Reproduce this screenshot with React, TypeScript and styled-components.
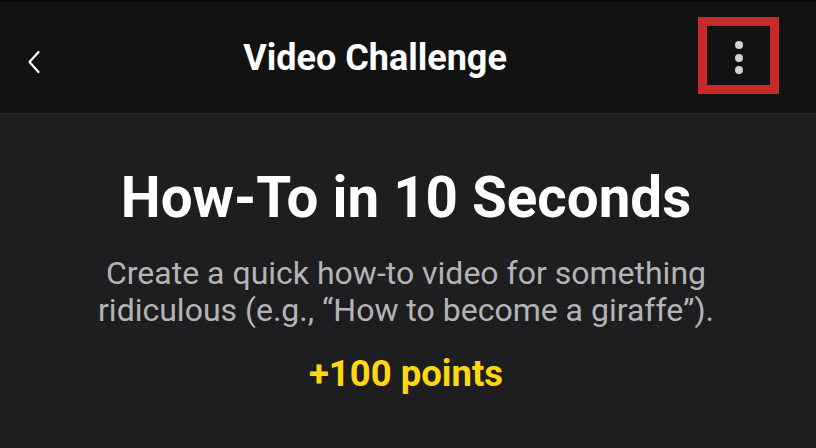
import styled, { createGlobalStyle } from "styled-components";

const GlobalStyle = createGlobalStyle`
  html, body {
    margin: 0;
    padding: 0;
    background: #1e1e20;
  }
  body {
    font-family: "Roboto", "Liberation Sans", sans-serif;
    -webkit-font-smoothing: antialiased;
  }
`;

const Screen = styled.div`
  width: 816px;
  height: 448px;
  display: flex;
  flex-direction: column;
  background: #1e1e20;
  overflow: hidden;
`;

const Header = styled.header`
  height: 111px;
  display: flex;
  align-items: center;
  padding: 0 37px 0 16px;
  background: #121212;
  border-top: 2px solid #060606;
  border-bottom: 1px solid #29292b;
  flex-shrink: 0;
`;

const BackButton = styled.button`
  width: 36px;
  height: 48px;
  display: flex;
  align-items: center;
  justify-content: center;
  padding: 8px 0 0;
  background: none;
  border: 0;
  color: #ffffff;
`;

const Title = styled.h1`
  flex: 1;
  margin: 0;
  text-align: center;
  font-size: 36px;
  line-height: 44px;
  font-weight: 700;
  color: #ffffff;
`;

const MenuButton = styled.button`
  box-sizing: border-box;
  width: 81px;
  height: 77px;
  margin-bottom: 4px;
  display: flex;
  flex-direction: column;
  align-items: center;
  justify-content: center;
  gap: 4.5px;
  padding: 4px 0 0;
  background: transparent;
  border: 9px solid #c8292b;
`;

const Dot = styled.span`
  width: 8px;
  height: 8px;
  border-radius: 50%;
  background: #d2d2d2;
`;

const Content = styled.main`
  flex: 1;
  display: flex;
  flex-direction: column;
  align-items: center;
  padding: 51px 4px 0 0;
  text-align: center;
`;

const Heading = styled.h2`
  margin: 0;
  font-size: 56.5px;
  line-height: 66px;
  font-weight: 700;
  color: #ffffff;
`;

const Description = styled.p`
  margin: 24px 0 0;
  max-width: 660px;
  font-size: 32px;
  line-height: 37px;
  font-weight: 400;
  color: #b4b4b6;
`;

const Points = styled.p`
  margin: 23px 0 0;
  font-size: 36.5px;
  line-height: 44px;
  font-weight: 700;
  color: #fdd70f;
`;

const ChevronLeft = () => (
  <svg width="14" height="24" viewBox="0 0 14 24" fill="none">
    <path
      d="M11.5 2 L2.5 12 L11.5 22"
      stroke="currentColor"
      strokeWidth="2.2"
      strokeLinecap="round"
      strokeLinejoin="round"
    />
  </svg>
);

export default function App() {
  return (
    <Screen>
      <GlobalStyle />
      <Header>
        <BackButton aria-label="Back">
          <ChevronLeft />
        </BackButton>
        <Title>Video Challenge</Title>
        <MenuButton aria-label="More options">
          <Dot />
          <Dot />
          <Dot />
        </MenuButton>
      </Header>
      <Content>
        <Heading>How-To in 10 Seconds</Heading>
        <Description>
          Create a quick how-to video for something ridiculous (e.g., “How to
          become a giraffe”).
        </Description>
        <Points>+100 points</Points>
      </Content>
    </Screen>
  );
}
